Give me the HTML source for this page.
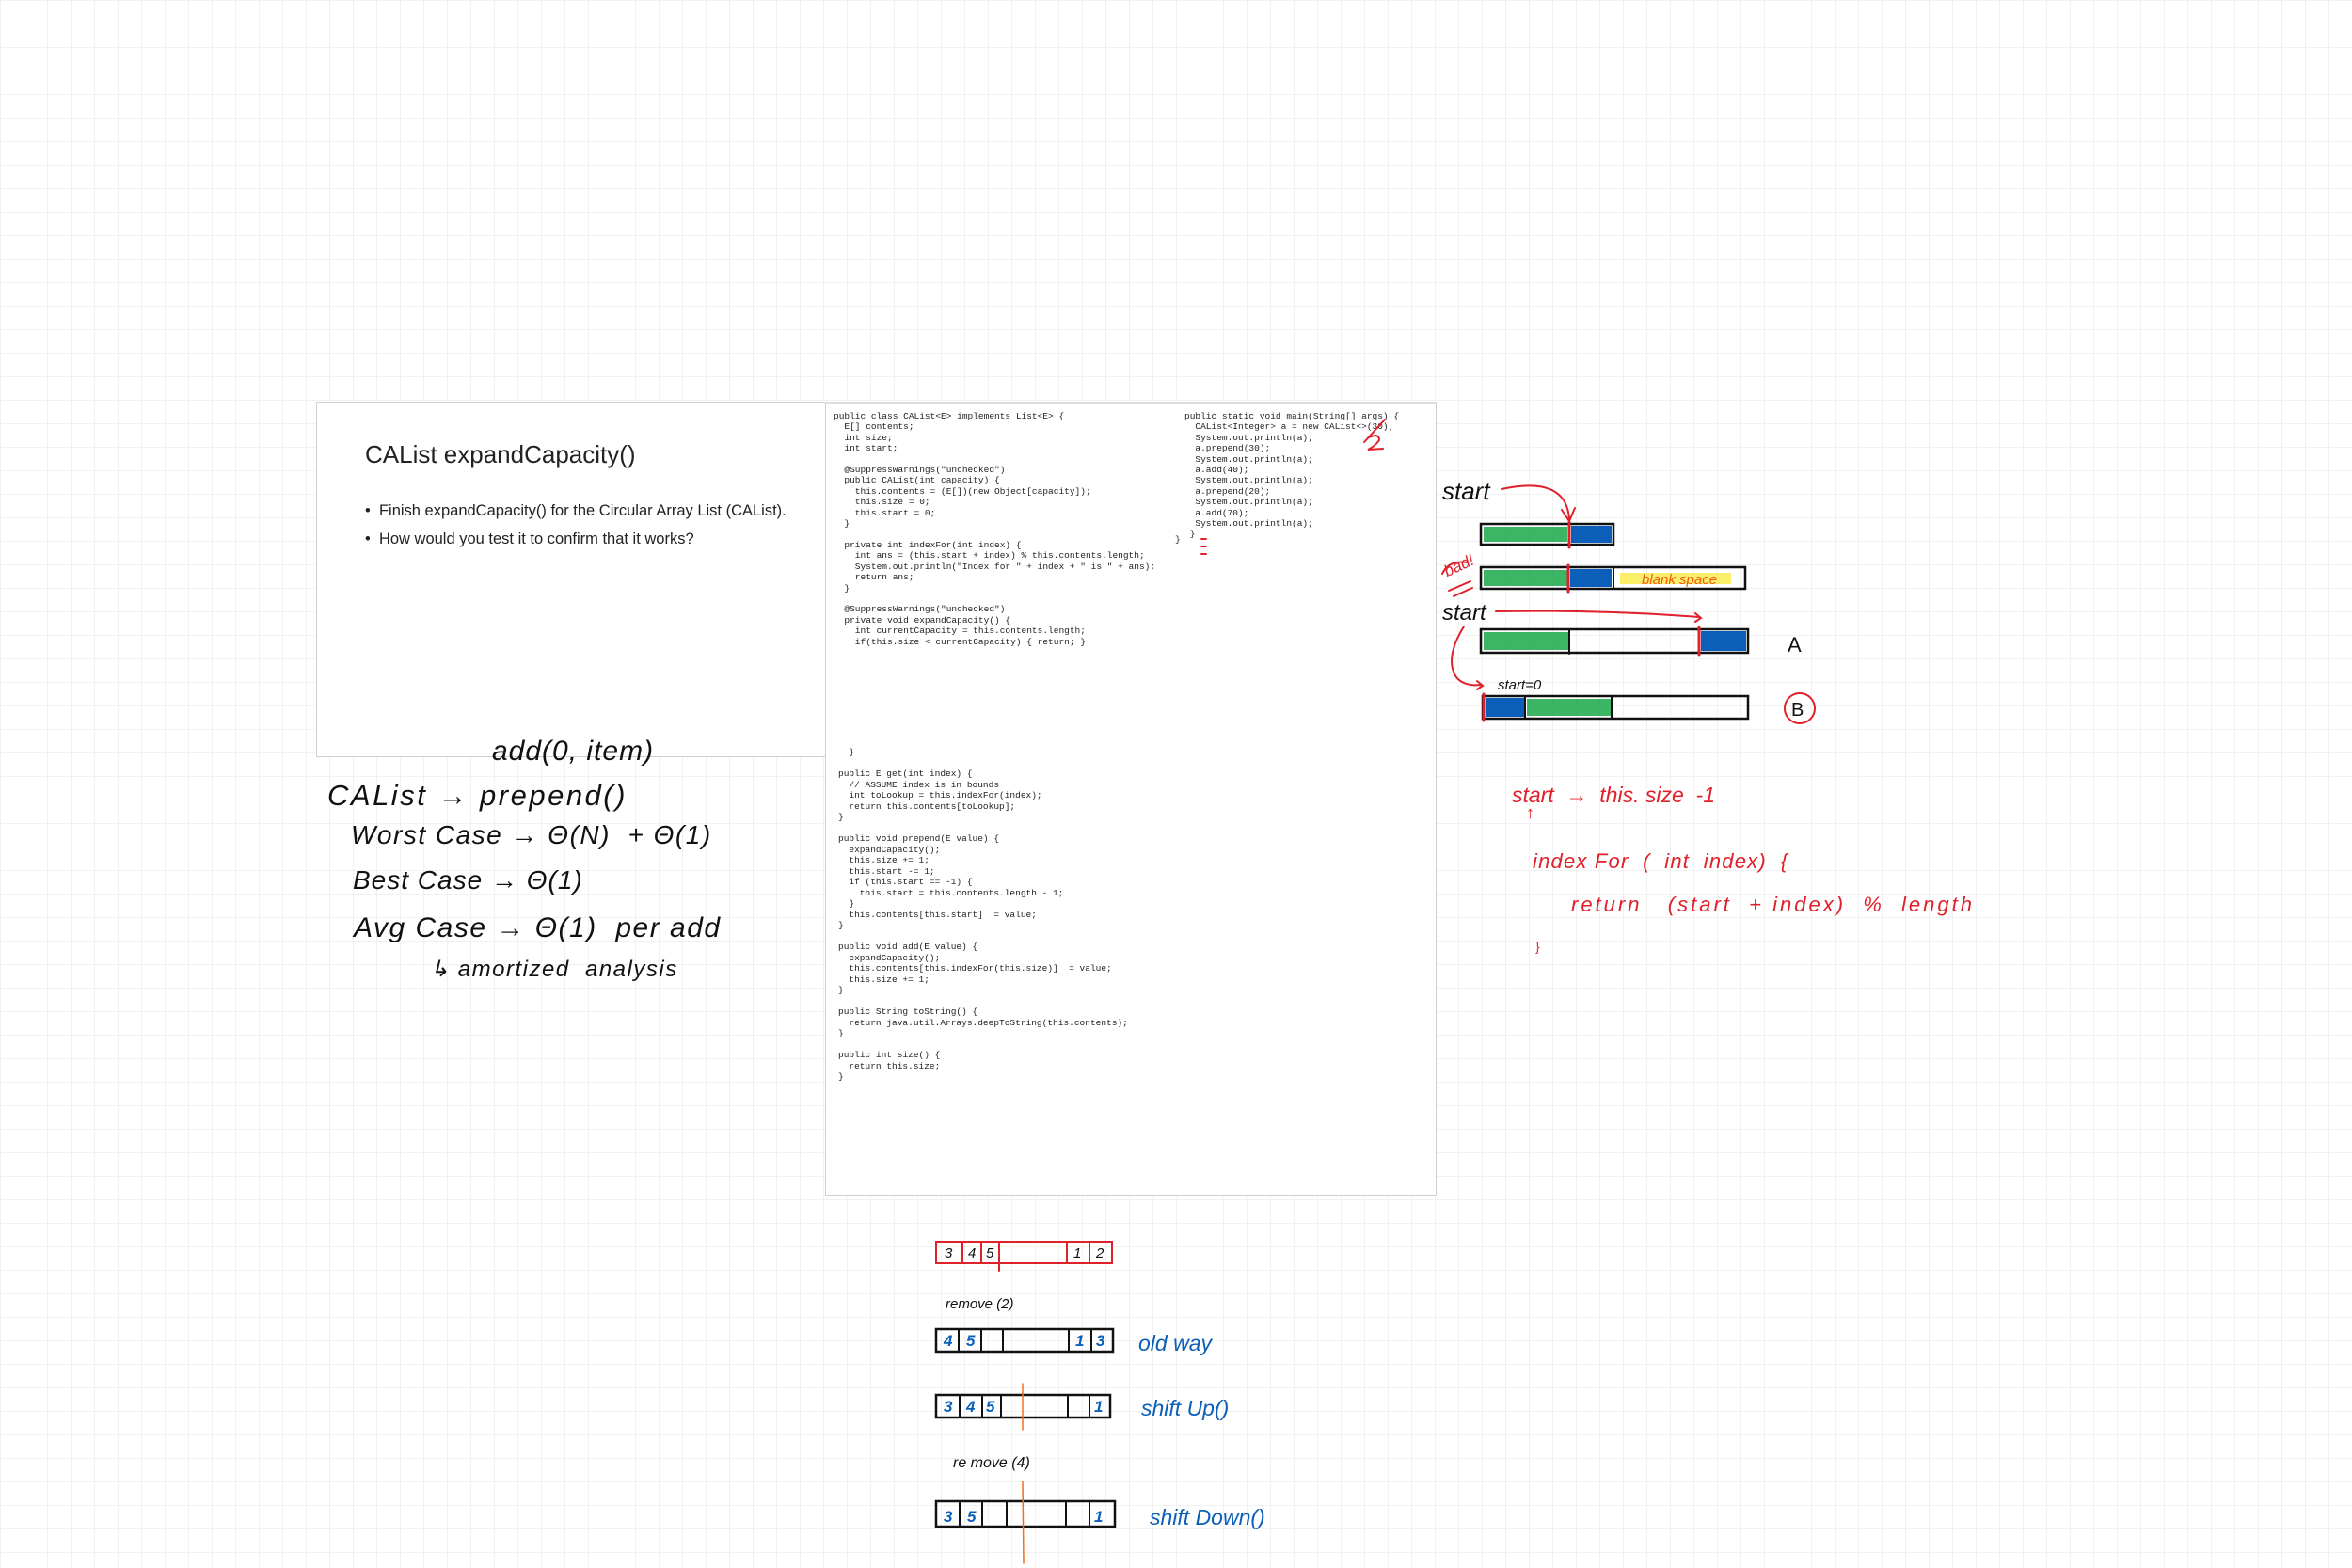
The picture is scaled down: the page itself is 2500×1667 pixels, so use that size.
<!DOCTYPE html>
<html><head><meta charset="utf-8"><style>
html,body{margin:0;padding:0}
body{width:2500px;height:1667px;position:relative;overflow:hidden;background:#fff;
background-image:linear-gradient(#f1f1f1 1px,transparent 1px),linear-gradient(90deg,#f1f1f1 1px,transparent 1px);background-size:25px 25px;font-family:"Liberation Sans",sans-serif}
.a{position:absolute;white-space:pre}
#slide{position:absolute;left:336px;top:427px;width:541px;height:376px;border:1px solid #cfcfcf;background:#fff}
#code{position:absolute;left:877px;top:427px;width:648px;height:840px;border:1px solid #cfcfcf;border-top:3px solid #ddd;background:#fff}
pre{margin:0;position:absolute;font-family:"Liberation Mono",monospace;color:#222}
.c1{font-size:9.5px;line-height:11.4px}
.c2{font-size:9.5px;line-height:11.5px}
.h{font-family:"Liberation Sans",sans-serif;font-style:italic;color:#111}
.r{color:#e0202a}.b{color:#0b5fb8}
</style></head><body>
<div id="slide">
<div class="a" style="left:51px;top:40px;font-size:26px;color:#222">CAList expandCapacity()</div>
<div class="a" style="left:51px;top:106px;font-size:16.5px;color:#222">•  Finish expandCapacity() for the Circular Array List (CAList).</div>
<div class="a" style="left:51px;top:136px;font-size:16.5px;color:#222">•  How would you test it to confirm that it works?</div>
</div>
<div id="code">
<pre class="c1" style="left:8px;top:7px">public class CAList&lt;E&gt; implements List&lt;E&gt; {
  E[] contents;
  int size;
  int start;

  @SuppressWarnings("unchecked")
  public CAList(int capacity) {
    this.contents = (E[])(new Object[capacity]);
    this.size = 0;
    this.start = 0;
  }

  private int indexFor(int index) {
    int ans = (this.start + index) % this.contents.length;
    System.out.println("Index for " + index + " is " + ans);
    return ans;
  }

  @SuppressWarnings("unchecked")
  private void expandCapacity() {
    int currentCapacity = this.contents.length;
    if(this.size &lt; currentCapacity) { return; }</pre>
<pre class="c1" style="left:381px;top:7px">public static void main(String[] args) {
  CAList&lt;Integer&gt; a = new CAList&lt;&gt;(30);
  System.out.println(a);
  a.prepend(30);
  System.out.println(a);
  a.add(40);
  System.out.println(a);
  a.prepend(20);
  System.out.println(a);
  a.add(70);
  System.out.println(a);
 }</pre>
<pre class="c1" style="left:371px;top:138px">}</pre>
<pre class="c2" style="left:13px;top:364px">  }

public E get(int index) {
  // ASSUME index is in bounds
  int toLookup = this.indexFor(index);
  return this.contents[toLookup];
}

public void prepend(E value) {
  expandCapacity();
  this.size += 1;
  this.start -= 1;
  if (this.start == -1) {
    this.start = this.contents.length - 1;
  }
  this.contents[this.start]  = value;
}

public void add(E value) {
  expandCapacity();
  this.contents[this.indexFor(this.size)]  = value;
  this.size += 1;
}

public String toString() {
  return java.util.Arrays.deepToString(this.contents);
}

public int size() {
  return this.size;
}</pre>
</div>
<div class="a h" style="left:523px;top:782px;font-size:30px;letter-spacing:1px">add(0, item)</div>
<div class="a h" style="left:348px;top:828px;font-size:31px;letter-spacing:2.5px">CAList → prepend()</div>
<div class="a h" style="left:373px;top:872px;font-size:28px;letter-spacing:1.5px">Worst Case → Θ(N)  + Θ(1)</div>
<div class="a h" style="left:375px;top:920px;font-size:28px;letter-spacing:1px">Best Case → Θ(1)</div>
<div class="a h" style="left:376px;top:970px;font-size:30px;letter-spacing:1.5px">Avg Case → Θ(1)  per add</div>
<div class="a h" style="left:457px;top:1016px;font-size:24px;letter-spacing:1.5px">↳ amortized  analysis</div>

<div class="a h r" style="left:1607px;top:832px;font-size:23px">start  →  this. size  -1</div>
<div class="a r" style="left:1622px;top:854px;font-size:18px">↑</div>
<div class="a h r" style="left:1629px;top:903px;font-size:22px;letter-spacing:1.2px">index For  (  int  index)  {</div>
<div class="a h r" style="left:1670px;top:949px;font-size:22px;letter-spacing:3px">return   (start  + index)  %  length</div>
<div class="a r" style="left:1632px;top:998px;font-size:14px">}</div>

<svg class="a" style="left:0;top:0" width="2500" height="1667" viewBox="0 0 2500 1667">
<g fill="none" stroke-linecap="round">
<path d="M1450 470 L1472 446 M1455 465 Q1466 460 1466 468 Q1462 474 1454 478 L1470 477" stroke="#e0202a" stroke-width="2"/>
<path d="M1277 573 l5 0 M1277 581 l5 0 M1277 589 l5 0" stroke="#e0202a" stroke-width="2"/>
<path d="M1596 520 Q1665 505 1668 552 M1660 542 L1668 554 L1674 540" stroke="#e0202a" stroke-width="2"/>
<rect x="1574" y="557" width="141" height="22" stroke="#111" stroke-width="2.5"/>
<rect x="1577" y="560" width="89" height="16" fill="#1aa84a" opacity=".85" stroke="none"/>
<rect x="1670" y="559" width="43" height="18" fill="#0b5fb8" stroke="none"/>
<line x1="1668" y1="555" x2="1668" y2="582" stroke="#e0202a" stroke-width="3"/>
<path d="M1533 610 Q1540 595 1560 598 M1540 628 L1563 618 M1545 634 L1565 625" stroke="#e0202a" stroke-width="2"/>
<rect x="1722" y="609" width="118" height="12" fill="#fbef6a" stroke="none"/>
<rect x="1574" y="603" width="281" height="23" stroke="#111" stroke-width="2.5"/>
<rect x="1577" y="606" width="89" height="17" fill="#1aa84a" opacity=".85" stroke="none"/>
<rect x="1669" y="605" width="44" height="19" fill="#0b5fb8" stroke="none"/>
<line x1="1715" y1="603" x2="1715" y2="626" stroke="#111" stroke-width="2"/>
<line x1="1667" y1="601" x2="1667" y2="629" stroke="#e0202a" stroke-width="3"/>
<path d="M1590 650 Q1700 648 1806 656 M1802 652 L1808 657 L1802 661" stroke="#e0202a" stroke-width="2"/>
<rect x="1574" y="669" width="284" height="25" stroke="#111" stroke-width="2.5"/>
<rect x="1577" y="672" width="90" height="19" fill="#1aa84a" opacity=".85" stroke="none"/>
<line x1="1668" y1="669" x2="1668" y2="695" stroke="#111" stroke-width="2"/>
<rect x="1808" y="671" width="48" height="21" fill="#0b5fb8" stroke="none"/>
<line x1="1806" y1="667" x2="1806" y2="696" stroke="#e0202a" stroke-width="3"/>
<path d="M1556 666 Q1535 700 1548 720 Q1556 730 1575 728 M1570 724 L1576 729 L1570 733" stroke="#e0202a" stroke-width="2"/>
<rect x="1576" y="740" width="282" height="24" stroke="#111" stroke-width="2.5"/>
<rect x="1579" y="742" width="41" height="20" fill="#0b5fb8" stroke="none"/>
<rect x="1623" y="743" width="89" height="18" fill="#1aa84a" opacity=".85" stroke="none"/>
<line x1="1621" y1="740" x2="1621" y2="764" stroke="#111" stroke-width="2"/>
<line x1="1713" y1="740" x2="1713" y2="764" stroke="#111" stroke-width="2"/>
<line x1="1577" y1="738" x2="1577" y2="766" stroke="#e0202a" stroke-width="3"/>
<circle cx="1913" cy="753" r="16" stroke="#e0202a" stroke-width="2"/>
<rect x="995" y="1320" width="187" height="23" stroke="#e0202a" stroke-width="2"/>
<path d="M1023 1320V1343M1043 1320V1343M1062 1320V1351M1134 1320V1343M1158 1320V1343" stroke="#e0202a" stroke-width="2"/>
<rect x="995" y="1413" width="188" height="24" stroke="#111" stroke-width="2.5"/>
<path d="M1019 1413V1437M1043 1413V1437M1066 1413V1437M1136 1413V1437M1160 1413V1437" stroke="#111" stroke-width="2"/>
<rect x="995" y="1483" width="185" height="24" stroke="#111" stroke-width="2.5"/>
<path d="M1020 1483V1507M1044 1483V1507M1064 1483V1507M1135 1483V1507M1158 1483V1507" stroke="#111" stroke-width="2"/>
<line x1="1087" y1="1471" x2="1087" y2="1520" stroke="#f07020" stroke-width="1.5"/>
<rect x="995" y="1596" width="190" height="27" stroke="#111" stroke-width="2.5"/>
<path d="M1020 1596V1623M1044 1596V1623M1070 1596V1623M1133 1596V1623M1158 1596V1623" stroke="#111" stroke-width="2"/>
<line x1="1087" y1="1575" x2="1088" y2="1662" stroke="#f07020" stroke-width="1.5"/>
</g>
<g font-family="Liberation Sans, sans-serif" font-style="italic">
<text x="1533" y="531" font-size="26" fill="#111">start</text>
<text x="1533" y="659" font-size="24" fill="#111">start</text>
<text x="1536" y="612" font-size="17" fill="#e0202a" transform="rotate(-25 1540 608)">bad!</text>
<text x="1745" y="621" font-size="15" fill="#f05a10">blank space</text>
<text x="1900" y="693" font-size="22" fill="#111" font-style="normal">A</text>
<text x="1904" y="761" font-size="20" fill="#111" font-style="normal">B</text>
<text x="1592" y="733" font-size="15" fill="#111">start=0</text>
<g font-size="15" fill="#111"><text x="1004" y="1337">3</text><text x="1029" y="1337">4</text><text x="1048" y="1337">5</text><text x="1141" y="1337">1</text><text x="1165" y="1337">2</text></g>
<text x="1005" y="1391" font-size="15" fill="#111">remove (2)</text>
<g font-size="17" fill="#0b5fb8" font-weight="bold"><text x="1003" y="1431">4</text><text x="1027" y="1431">5</text><text x="1143" y="1431">1</text><text x="1165" y="1431">3</text>
<text x="1003" y="1501">3</text><text x="1027" y="1501">4</text><text x="1048" y="1501">5</text><text x="1163" y="1501">1</text>
<text x="1003" y="1618">3</text><text x="1028" y="1618">5</text><text x="1163" y="1618">1</text></g>
<text x="1210" y="1436" font-size="23" fill="#0b5fb8">old way</text>
<text x="1213" y="1505" font-size="23" fill="#0b5fb8">shift Up()</text>
<text x="1013" y="1560" font-size="16" fill="#111">re move (4)</text>
<text x="1222" y="1621" font-size="23" fill="#0b5fb8">shift Down()</text>
</g>
</svg>
</body></html>
